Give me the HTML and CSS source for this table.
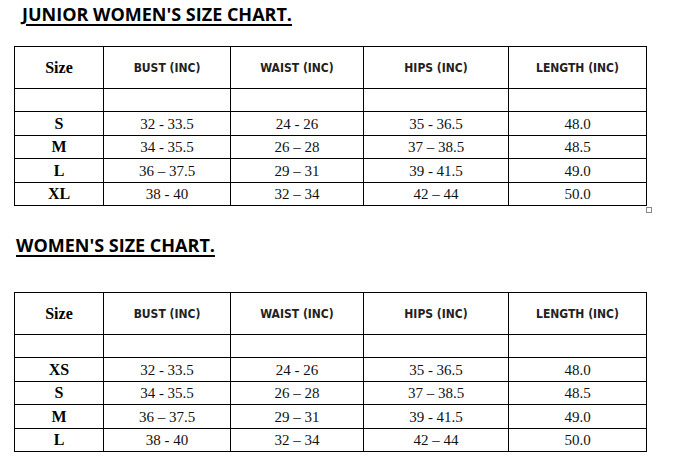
FILE: index.html
```html
<!DOCTYPE html>
<html>
<head>
<meta charset="utf-8">
<link rel="stylesheet" href="styles.css">
</head>
<body>
<div class="page">
  <section class="chart chart-junior">
    <h2 class="title title-junior">JUNIOR WOMEN'S SIZE CHART.</h2>
    <div class="table-wrap">
      <table class="size-table">
        <colgroup>
          <col class="c-size"><col class="c-bust"><col class="c-waist"><col class="c-hips"><col class="c-length">
        </colgroup>
        <thead>
          <tr class="head-row">
            <th class="h-size">Size</th><th>BUST (INC)</th><th>WAIST (INC)</th><th>HIPS (INC)</th><th>LENGTH (INC)</th>
          </tr>
        </thead>
        <tbody>
          <tr class="empty-row"><td></td><td></td><td></td><td></td><td></td></tr>
          <tr class="r1"><td class="size">S</td><td>32 - 33.5</td><td>24 - 26</td><td>35 - 36.5</td><td>48.0</td></tr>
          <tr class="r2"><td class="size">M</td><td>34 - 35.5</td><td>26 – 28</td><td>37 – 38.5</td><td>48.5</td></tr>
          <tr class="r3"><td class="size">L</td><td>36 – 37.5</td><td>29 – 31</td><td>39 - 41.5</td><td>49.0</td></tr>
          <tr class="r4"><td class="size">XL</td><td>38 - 40</td><td>32 – 34</td><td>42 – 44</td><td>50.0</td></tr>
        </tbody>
      </table>
      <span class="handle"></span>
    </div>
  </section>
  <section class="chart chart-women">
    <h2 class="title title-women">WOMEN'S SIZE CHART.</h2>
    <div class="table-wrap">
      <table class="size-table">
        <colgroup>
          <col class="c-size"><col class="c-bust"><col class="c-waist"><col class="c-hips"><col class="c-length">
        </colgroup>
        <thead>
          <tr class="head-row">
            <th class="h-size">Size</th><th>BUST (INC)</th><th>WAIST (INC)</th><th>HIPS (INC)</th><th>LENGTH (INC)</th>
          </tr>
        </thead>
        <tbody>
          <tr class="empty-row"><td></td><td></td><td></td><td></td><td></td></tr>
          <tr class="r1"><td class="size">XS</td><td>32 - 33.5</td><td>24 - 26</td><td>35 - 36.5</td><td>48.0</td></tr>
          <tr class="r2"><td class="size">S</td><td>34 - 35.5</td><td>26 – 28</td><td>37 – 38.5</td><td>48.5</td></tr>
          <tr class="r3"><td class="size">M</td><td>36 – 37.5</td><td>29 – 31</td><td>39 - 41.5</td><td>49.0</td></tr>
          <tr class="r4"><td class="size">L</td><td>38 - 40</td><td>32 – 34</td><td>42 – 44</td><td>50.0</td></tr>
        </tbody>
      </table>
    </div>
  </section>
</div>
</body>
</html>
```

FILE: styles.css
```css
html, body {
  margin: 0;
  padding: 0;
  background: #fff;
}

.page {
  display: flex;
  flex-direction: column;
  padding: 0 0 0 14px;
  color: #000;
}

.title {
  margin: 0;
  font-family: "Open Sans", "Liberation Sans", sans-serif;
  font-weight: 700;
  font-size: 18px;
  line-height: 22px;
  text-decoration: underline;
  text-underline-offset: 3px;
  text-decoration-thickness: 1.5px;
  color: #000;
}

.title-junior {
  padding: 3px 0 0 8px;
}

.title-women {
  padding: 0 0 0 2px;
}

.chart-junior .table-wrap {
  margin-top: 21px;
}

.chart-women {
  margin-top: 28px;
}

.chart-women .table-wrap {
  margin-top: 36px;
}

.table-wrap {
  position: relative;
  width: 633px;
}

.size-table {
  border-collapse: collapse;
  table-layout: fixed;
  width: 633px;
}

.c-size { width: 89px; }
.c-bust { width: 127px; }
.c-waist { width: 133px; }
.c-hips { width: 145px; }
.c-length { width: 138px; }

.size-table th,
.size-table td {
  border: 1px solid #000;
  padding: 0;
  text-align: center;
  vertical-align: middle;
}

.head-row th {
  height: 41px;
  font-family: "DejaVu Sans", Verdana, sans-serif;
  font-stretch: condensed;
  font-weight: 700;
  font-size: 12px;
  color: #222;
}

.head-row th.h-size {
  font-family: "Liberation Serif", "Times New Roman", serif;
  font-stretch: normal;
  font-size: 16px;
  color: #000;
}

.empty-row td {
  height: 22px;
}

.size-table tbody td {
  font-family: "Liberation Serif", "Times New Roman", serif;
  font-size: 15px;
  line-height: 18px;
  color: #111;
}

.size-table tbody td.size {
  font-weight: 700;
  font-size: 16px;
  color: #000;
}

.r1 td, .r3 td { height: 23px; }
.r2 td, .r4 td { height: 22px; }

.handle {
  position: absolute;
  right: -5px;
  bottom: -7px;
  width: 4px;
  height: 4px;
  border: 1px solid #888;
  background: #fff;
}
```
